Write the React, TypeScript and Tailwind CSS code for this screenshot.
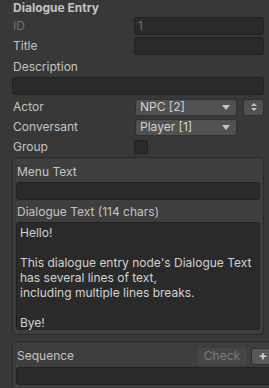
import React from 'react';

const font = { fontFamily: 'Inter, "Noto Sans", sans-serif' };

const Field = ({ value, dim }: { value?: string; dim?: boolean }) => (
  <div
    className={`h-[18px] rounded-[3px] border border-[#212121] bg-[#2a2a2a] px-[3px] text-[12px] leading-[16px] ${
      dim ? 'text-[#6f6f6f]' : 'text-[#c4c4c4]'
    }`}
  >
    {value}
  </div>
);

const Dropdown = ({ value }: { value: string }) => (
  <div className="flex h-[17px] w-[102px] items-center justify-between rounded-[3px] border border-[#303030] bg-[#515151] pl-[4px] pr-[6px] text-[12px] text-[#d2d2d2]">
    <span>{value}</span>
    <svg width="8" height="5" viewBox="0 0 8 5">
      <path d="M0 0 L8 0 L4 5 Z" fill="#c4c4c4" />
    </svg>
  </div>
);

const Row = ({ label, dim, children }: { label: string; dim?: boolean; children: React.ReactNode }) => (
  <div className="flex h-[18px] items-center">
    <div className={`w-[121px] shrink-0 text-[12px] ${dim ? 'text-[#6f6f6f]' : 'text-[#c4c4c4]'}`}>{label}</div>
    <div className="flex-1">{children}</div>
  </div>
);

export default function App() {
  const lines = [
    'Hello!',
    '',
    "This dialogue entry node's Dialogue Text",
    'has several lines of text,',
    'including multiple lines breaks.',
    '',
    'Bye!',
  ];

  return (
    <div className="h-[388px] w-[269px] overflow-hidden bg-[#383838] pl-[13px] pr-[5px] text-[#c4c4c4]" style={font}>
      <div className="flex h-[16px] items-center text-[12px] font-bold text-[#c4c4c4]">Dialogue Entry</div>

      <div className="mt-[1px] flex flex-col gap-[2px]">
        <Row label="ID" dim>
          <Field value="1" dim />
        </Row>
        <Row label="Title">
          <Field />
        </Row>
      </div>

      <div className="mt-[2px] flex h-[19px] items-center text-[12px]">Description</div>
      <div className="-ml-[1px] mt-[1px]">
        <Field />
      </div>

      <div className="mt-[3px] flex flex-col gap-[2px]">
        <div className="flex h-[18px] items-center">
          <div className="w-[122px] shrink-0 text-[12px]">Actor</div>
          <Dropdown value="NPC [2]" />
          <div className="ml-auto flex h-[17px] w-[21px] flex-col items-center justify-center gap-[2px] rounded-[3px] border border-[#303030] bg-[#515151]">
            <svg width="6" height="3" viewBox="0 0 6 3">
              <path d="M0 3 L6 3 L3 0 Z" fill="#c4c4c4" />
            </svg>
            <svg width="6" height="3" viewBox="0 0 6 3">
              <path d="M0 0 L6 0 L3 3 Z" fill="#c4c4c4" />
            </svg>
          </div>
        </div>
        <div className="flex h-[18px] items-center">
          <div className="w-[122px] shrink-0 text-[12px]">Conversant</div>
          <Dropdown value="Player [1]" />
        </div>
        <div className="flex h-[18px] items-center">
          <div className="w-[121px] shrink-0 text-[12px]">Group</div>
          <div className="h-[14px] w-[14px] rounded-[2px] border border-[#212121] bg-[#2a2a2a]" />
        </div>
      </div>

      <div className="-ml-[1px] mt-[1px] rounded-[3px] border border-[#2a2a2a] bg-[#3e3e3e] px-[3px] pb-[4px]">
        <div className="flex h-[24px] items-center pl-[1px] pt-[4px] text-[12px]">Menu Text</div>
        <Field />
        <div className="flex h-[22px] items-center pl-[1px] pt-[2px] text-[12px]">Dialogue Text (114 chars)</div>
        <div className="h-[108px] rounded-[3px] border border-[#212121] bg-[#2a2a2a] px-[3px] pt-[2px] text-[12px] leading-[15px] text-[#d2d2d2]">
          {lines.map((l, i) => (
            <div key={i} className="h-[15px] whitespace-nowrap">
              {l}
            </div>
          ))}
        </div>
      </div>

      <div className="-ml-[1px] -mr-[12px] mt-[6px] rounded-[3px] border border-[#2a2a2a] bg-[#3e3e3e] pl-[3px] pb-[4px]">
        <div className="flex h-[24px] items-center pt-[4px]">
          <div className="pl-[1px] text-[12px]">Sequence</div>
          <div className="ml-auto flex h-[17px] w-[50px] items-center justify-center rounded-[3px] bg-[#464646] text-[12px] text-[#7c7c7c]">
            Check
          </div>
          <div className="ml-[4px] flex h-[17px] w-[24px] items-center justify-center rounded-[3px] border border-[#303030] bg-[#585858] text-[13px] font-bold text-[#d2d2d2]">
            +
          </div>
        </div>
        <div className="mt-[1px]">
          <Field />
        </div>
      </div>
    </div>
  );
}
